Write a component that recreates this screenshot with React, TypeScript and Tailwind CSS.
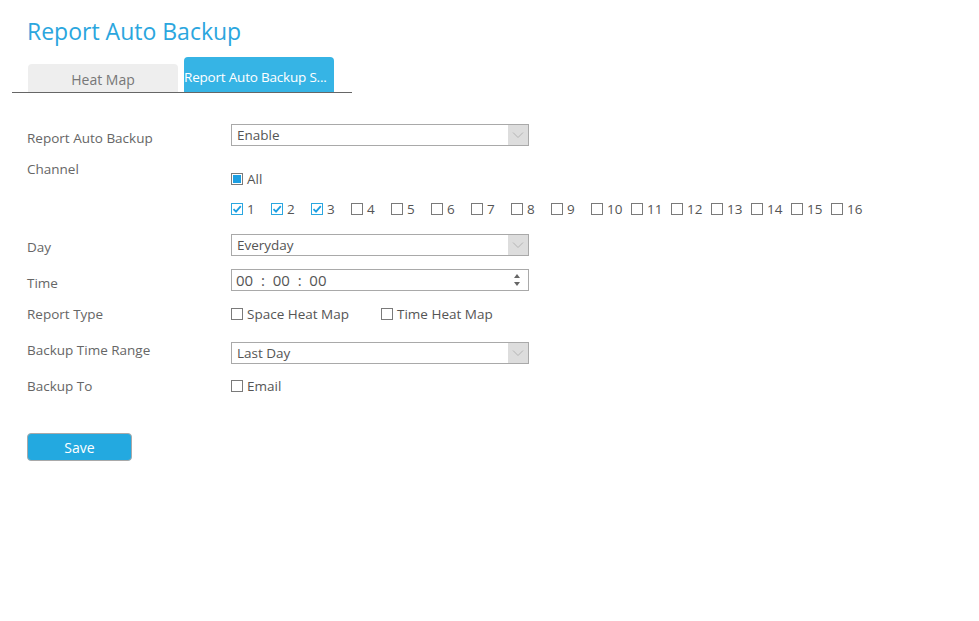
import { useState } from "react";

const FONT = { fontFamily: '"Open Sans", "Noto Sans", sans-serif' };

function Check({ checked, blue }: { checked?: boolean; blue?: boolean }) {
  // blue = "All" style: grey frame with a filled square
  if (blue)
    return (
      <span className="w-[12px] h-[12px] border border-[#7a7a7a] bg-white flex items-center justify-center flex-shrink-0">
        <span className="w-[8px] h-[8px] bg-[#1c9fe2]" />
      </span>
    );
  return (
    <span
      className={`w-[12px] h-[12px] border bg-white flex items-center justify-center flex-shrink-0 ${
        checked ? "border-[#2aa7e0]" : "border-[#7a7a7a]"
      }`}
    >
      {checked && (
        <svg width="10" height="10" viewBox="0 0 10 10">
          <path d="M1.5 5.2 L4 7.6 L8.8 2.2" fill="none" stroke="#1c9fe2" strokeWidth="1.8" />
        </svg>
      )}
    </span>
  );
}

function Select({ value }: { value: string }) {
  return (
    <div className="w-[298px] h-[22px] border border-[#a9a9a9] flex items-stretch bg-white">
      <div className="flex-1 px-[5px] text-[13.5px] leading-[20px] text-[#555]">{value}</div>
      <div className="w-[20px] bg-[#dddddd] flex items-center justify-center">
        <svg width="12" height="8" viewBox="0 0 12 8">
          <path d="M1 1.5 L6 6.5 L11 1.5" fill="none" stroke="#b5b5b5" strokeWidth="1" />
        </svg>
      </div>
    </div>
  );
}

const CHANNELS = Array.from({ length: 16 }, (_, i) => i + 1);

export default function App() {
  const [tab] = useState(1);

  return (
    <div className="w-[979px] h-[621px] bg-white overflow-hidden" style={FONT}>
      {/* Title */}
      <div className="pl-[27px] mt-[15px] h-8 text-[23px] leading-8 text-[#2ba6de]">Report Auto Backup</div>

      {/* Tabs */}
      <div className="ml-[12px] mt-[10px] w-[340px] border-b border-[#666] flex items-end pl-[16px] gap-[6px]">
        <div
          className={`w-[150px] h-[28px] rounded-t-[4px] flex items-center justify-center text-[14px] pt-[2px] ${
            tab === 0 ? "bg-[#36b4e5] text-white" : "bg-[#eeeeee] text-[#777]"
          }`}
        >
          Heat Map
        </div>
        <div className="w-[150px] h-[35px] rounded-t-[4px] bg-[#36b4e5] text-white text-[13.5px] tracking-[-0.2px] flex items-center pt-[6px] whitespace-nowrap">
          Report Auto Backup S...
        </div>
      </div>

      {/* Form */}
      <div className="pl-[27px] text-[13.5px] text-[#666]">
        <div className="flex mt-[31px] h-[22px]">
          <div className="w-[204px] mt-[4px] h-5 leading-5">Report Auto Backup</div>
          <Select value="Enable" />
        </div>

        <div className="flex mt-[13px] h-[60px]">
          <div className="w-[204px] h-5 leading-5">Channel</div>
          <div className="pt-[10px]">
            <div className="flex items-center gap-[4px] h-5 text-[#555]">
              <Check blue />
              <span>All</span>
            </div>
            <div className="flex mt-[10px] h-5">
              {CHANNELS.map((c) => (
                <div key={c} className="w-[40px] flex items-center gap-[4px] text-[#555]">
                  <Check checked={c <= 3} />
                  <span>{c}</span>
                </div>
              ))}
            </div>
          </div>
        </div>

        <div className="flex mt-[15px] h-[22px]">
          <div className="w-[204px] mt-[3px] h-5 leading-5">Day</div>
          <Select value="Everyday" />
        </div>

        <div className="flex mt-[13px] h-[22px]">
          <div className="w-[204px] mt-[4px] h-5 leading-5">Time</div>
          <div className="w-[298px] h-[22px] border border-[#a9a9a9] flex items-center bg-white">
            <div className="flex-1 pl-[4px] text-[15px] leading-[20px] text-[#555] whitespace-pre">00  :  00  :  00</div>
            <div className="w-[22px] flex flex-col items-center gap-[4px]">
              <svg width="6" height="4" viewBox="0 0 6 4">
                <path d="M0 4 L3 0 L6 4 Z" fill="#666" />
              </svg>
              <svg width="6" height="4" viewBox="0 0 6 4">
                <path d="M0 0 L3 4 L6 0 Z" fill="#666" />
              </svg>
            </div>
          </div>
        </div>

        <div className="flex mt-[13px] h-5">
          <div className="w-[204px] h-5 leading-5">Report Type</div>
          <div className="flex items-center text-[#555]">
            <div className="w-[150px] flex items-center gap-[4px]">
              <Check />
              <span>Space Heat Map</span>
            </div>
            <div className="flex items-center gap-[4px]">
              <Check />
              <span>Time Heat Map</span>
            </div>
          </div>
        </div>

        <div className="flex mt-[18px] h-[22px]">
          <div className="w-[204px] -mt-[2px] h-5 leading-5">Backup Time Range</div>
          <Select value="Last Day" />
        </div>

        <div className="flex mt-[12px] h-5">
          <div className="w-[204px] h-5 leading-5">Backup To</div>
          <div className="flex items-center gap-[4px] text-[#555]">
            <Check />
            <span>Email</span>
          </div>
        </div>

        <button className="mt-[37px] w-[105px] h-[28px] rounded-[4px] border border-[#a9a9a9] bg-[#23a9e0] text-white text-[14px] flex items-center justify-center">
          Save
        </button>
      </div>
    </div>
  );
}
